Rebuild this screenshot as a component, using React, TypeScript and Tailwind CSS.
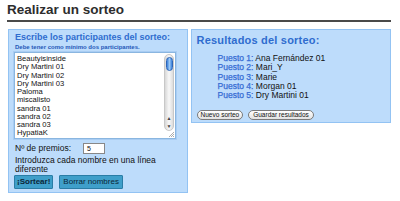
import React from "react";

const names = [
  "Beautyisinside",
  "Dry Martini 01",
  "Dry Martini 02",
  "Dry Martini 03",
  "Paloma",
  "miscalisto",
  "sandra 01",
  "sandra 02",
  "sandra 03",
  "HypatiaK",
];

const results = [
  ["Puesto 1:", "Ana Fernández 01"],
  ["Puesto 2:", "Mari_Y"],
  ["Puesto 3:", "Marie"],
  ["Puesto 4:", "Morgan 01"],
  ["Puesto 5:", "Dry Martini 01"],
];

export default function App() {
  return (
    <div
      className="w-[400px] h-[201px] bg-white overflow-hidden pl-[7px] pr-[9px] pt-[1px]"
      style={{ fontFamily: '"Liberation Sans", Arial, sans-serif' }}
    >
      <div className="border-b-2 border-[#4a4a4a] h-[21px] flex items-end pb-[2px]">
        <span className="text-[13.5px] leading-[17px] text-[#2d2d2d] font-bold">
          Realizar un sorteo
        </span>
      </div>
      <div className="flex items-start gap-[3px] mt-[7px] ml-[1px]">
        {/* Left panel */}
        <div className="w-[180px] h-[164px] bg-[#bddcfb] border border-[#93c3f3] px-[5px] pt-[2px]">
          <div className="text-[9px] leading-[11px] font-bold text-[#2f6ccf] pl-[1px]">
            Escribe los participantes del sorteo:
          </div>
          <div className="text-[6px] leading-[8px] font-bold text-[#2458b8] pl-[1px]">
            Debe tener como mínimo dos participantes.
          </div>
          <div className="relative w-[162px] h-[87px] bg-white border border-[#8ab6e0] shadow-[0_0_0_1px_#a9cdf3] mt-[1px] overflow-hidden">
            <div className="pl-[2px] pt-[2px] text-[7.6px] leading-[8.25px] text-[#111]">
              {names.map((n) => (
                <div key={n}>{n}</div>
              ))}
            </div>
            {/* aqua scrollbar */}
            <div className="absolute right-[1px] top-[1px] w-[10px] h-[77px] bg-gradient-to-r from-[#d8d8d8] via-[#f8f8f8] to-[#dcdcdc] rounded-[5px] border border-[#c8c8c8]">
              <div className="mx-auto mt-[2px] w-[7px] h-[14px] rounded-[4px] bg-gradient-to-r from-[#3a7fd8] via-[#9ccaf7] to-[#3a7fd8] border border-[#2d66b8]" />
            </div>
            <div className="absolute right-[1px] top-[61px] w-[10px] h-[16px] flex flex-col items-center justify-around text-[5px] leading-[5px] text-[#444]">
              <span>▲</span>
              <span>▼</span>
            </div>
            <svg className="absolute right-[1px] bottom-[1px]" width="6" height="6" viewBox="0 0 6 6">
              <path d="M1 6 L6 1 M3 6 L6 3 M5 6 L6 5" stroke="#999" strokeWidth="0.8" />
            </svg>
          </div>
          <div className="flex items-center mt-[4px] pl-[1px] text-[8.5px] leading-[11px] text-[#111]">
            <span className="w-[68px]">Nº de premios:</span>
            <div className="w-[22px] h-[11px] bg-white border border-[#888] text-[7px] leading-[9px] pl-[3px]">
              5
            </div>
          </div>
          <div className="pl-[1px] mt-[2px] text-[8.5px] leading-[9px] text-[#111] w-[165px]">
            Introduzca cada nombre en una línea diferente
          </div>
          <div className="flex gap-[6px] mt-[1px]">
            <button className="h-[14px] px-[2px] bg-[#3f9fca] border border-[#2a7da6] text-[8px] leading-[12px] font-bold text-[#0b2638] rounded-[1px]">
              ¡Sortear!
            </button>
            <button className="h-[14px] px-[3px] bg-[#3f9fca] border border-[#2a7da6] text-[8px] leading-[12px] text-[#0b2638] rounded-[1px]">
              Borrar nombres
            </button>
          </div>
        </div>
        {/* Right panel */}
        <div className="w-[201px] h-[94px] bg-[#bddcfb] border border-[#93c3f3] px-[5px] pt-[3px]">
          <div className="text-[11px] leading-[14px] font-bold text-[#2f6ccf] tracking-[0.2px]">
            Resultados del sorteo:
          </div>
          <div className="pl-[21px] mt-[7px] text-[8.5px] leading-[9.25px]">
            {results.map(([a, b]) => (
              <div key={a}>
                <span className="text-[#366cd4] [-webkit-text-stroke:0.25px_#366cd4]">{a}</span>{" "}
                <span className="text-[#111]">{b}</span>
              </div>
            ))}
          </div>
          <div className="flex gap-[5px] mt-[10px]">
            <button className="h-[10px] px-[3px] rounded-full border border-[#7a7a7a] bg-gradient-to-b from-white to-[#e2e2e2] text-[6.5px] leading-[8px] text-[#111]">
              Nuevo sorteo
            </button>
            <button className="h-[10px] px-[4px] rounded-full border border-[#7a7a7a] bg-gradient-to-b from-white to-[#e2e2e2] text-[6.5px] leading-[8px] text-[#111]">
              Guardar resultados
            </button>
          </div>
        </div>
      </div>
    </div>
  );
}
